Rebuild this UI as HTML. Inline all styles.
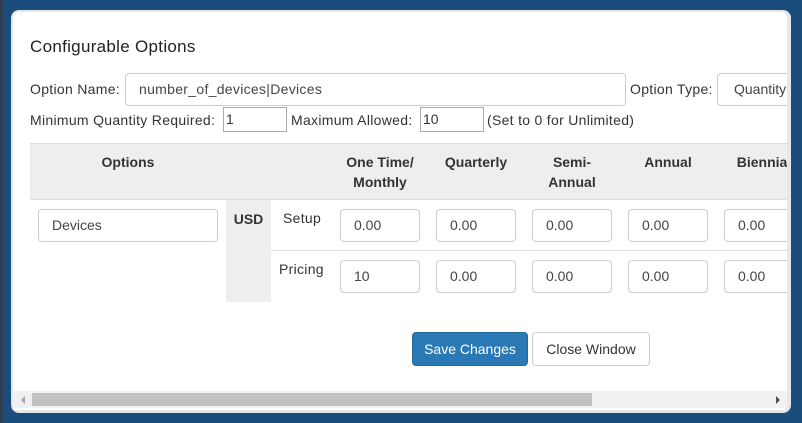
<!DOCTYPE html>
<html><head><style>
*{box-sizing:border-box;margin:0;padding:0}
body{width:802px;height:423px;background:#1a4c7c;position:relative;overflow:hidden;font-family:"Liberation Sans",sans-serif;font-size:14px;color:#333}
.a{position:absolute}
.panel{left:11px;top:10px;width:780px;height:403px;background:#e4e8ec;border-radius:8px}
.inner{left:13px;top:12px;width:774px;height:398px;background:#fff;border-radius:6px 6px 4px 4px;overflow:hidden}
.in{position:absolute;border:1px solid #ccc;border-radius:4px;background:#fff;padding-left:13px;line-height:31px;height:33px;color:#444}
.sq{position:absolute;border:1px solid #aaa;background:#fff;height:25px;line-height:23px;padding-left:2px}
.t{position:absolute;white-space:nowrap;letter-spacing:0.3px}
.h{position:absolute;font-weight:bold;text-align:center;line-height:20px;color:#333}
</style></head><body>
<div class="a" style="left:0;top:0;width:3px;height:423px;background:#2c3e50"></div>
<div class="a panel"></div>
<div class="a inner">
<div class="t" style="left:17px;top:25px;font-size:17px;color:#222">Configurable Options</div>
<div class="t" style="left:17px;top:69px">Option Name:</div>
<div class="in" style="left:112px;top:61px;width:501px;letter-spacing:0.3px">number_of_devices|Devices</div>
<div class="t" style="left:617px;top:69px">Option Type:</div>
<div class="in" style="left:704px;top:61px;width:120px;padding-left:16px">Quantity</div>
<div class="t" style="left:17px;top:100px">Minimum Quantity Required:</div>
<div class="sq" style="left:210px;top:95px;width:64px">1</div>
<div class="t" style="left:278px;top:100px">Maximum Allowed:</div>
<div class="sq" style="left:407px;top:95px;width:64px">10</div>
<div class="t" style="left:474px;top:100px">(Set to 0 for Unlimited)</div>
<div class="a" style="left:17px;top:131px;width:760px;height:57px;background:#eee;border-top:1px solid #ddd;border-bottom:1px solid #ddd"></div>
<div class="h" style="left:17px;top:140px;width:196px">Options</div>
<div class="h" style="left:317px;top:140px;width:100px">One Time/<br>Monthly</div>
<div class="h" style="left:413px;top:140px;width:100px">Quarterly</div>
<div class="h" style="left:509px;top:140px;width:100px">Semi-<br>Annual</div>
<div class="h" style="left:605px;top:140px;width:100px">Annual</div>
<div class="h" style="left:701px;top:140px;width:100px">Biennial</div>
<div class="a" style="left:213px;top:188px;width:45px;height:102px;background:#eee"></div>
<div class="h" style="left:213px;top:197px;width:45px">USD</div>
<div class="a" style="left:258px;top:238px;width:520px;height:1px;background:#ddd"></div>
<div class="t" style="left:270px;top:198px">Setup</div>
<div class="t" style="left:266px;top:249px">Pricing</div>
<div class="in" style="left:25px;top:197px;width:180px">Devices</div>
<div class="in" style="left:327px;top:197px;width:80px">0.00</div>
<div class="in" style="left:423px;top:197px;width:80px">0.00</div>
<div class="in" style="left:519px;top:197px;width:80px">0.00</div>
<div class="in" style="left:615px;top:197px;width:80px">0.00</div>
<div class="in" style="left:711px;top:197px;width:80px">0.00</div>
<div class="in" style="left:327px;top:248px;width:80px">10</div>
<div class="in" style="left:423px;top:248px;width:80px">0.00</div>
<div class="in" style="left:519px;top:248px;width:80px">0.00</div>
<div class="in" style="left:615px;top:248px;width:80px">0.00</div>
<div class="in" style="left:711px;top:248px;width:80px">0.00</div>
<div class="a" style="left:399px;top:320px;width:116px;height:34px;background:#2a78b4;border:1px solid #24689c;border-radius:4px;color:#fff;text-align:center;line-height:32px">Save Changes</div>
<div class="a" style="left:519px;top:320px;width:118px;height:34px;background:#fff;border:1px solid #ccc;border-radius:4px;text-align:center;line-height:32px">Close Window</div>
<div class="a" style="left:0;top:379px;width:774px;height:17px;background:#f1f1f1"></div>
<div class="a" style="left:19px;top:381px;width:560px;height:13px;background:#c1c1c1"></div>
<div class="a" style="left:8px;top:384px;width:0;height:0;border-top:4px solid transparent;border-bottom:4px solid transparent;border-right:4px solid #a3a3a3"></div>
<div class="a" style="left:763px;top:384px;width:0;height:0;border-top:4px solid transparent;border-bottom:4px solid transparent;border-left:4px solid #505050"></div>
</div>
</body></html>
